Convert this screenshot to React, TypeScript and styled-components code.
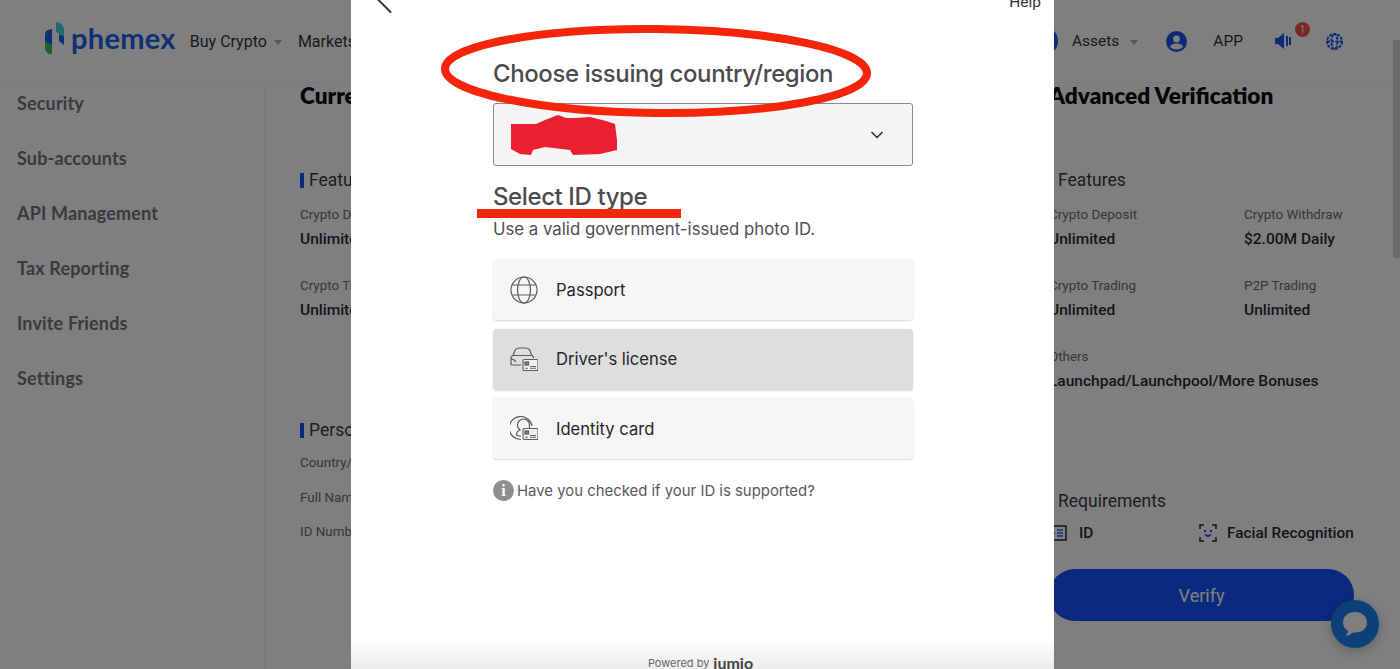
import React from 'react';
import styled, { createGlobalStyle } from 'styled-components';
import { ChevronDown, ChevronLeft } from 'lucide-react';

const GlobalStyle = createGlobalStyle`
  html, body {
    margin: 0;
    padding: 0;
    height: 669px;
    overflow: hidden;
    background: #fff;
    font-family: Roboto, "Liberation Sans", sans-serif;
  }
  * { box-sizing: border-box; }
`;

const Page = styled.div`
  width: 1400px;
  height: 669px;
  overflow: hidden;
  display: flex;
  flex-direction: column;
  background: #fff;
`;

const Header = styled.header`
  height: 83px;
  flex: none;
  display: flex;
  align-items: center;
  justify-content: space-between;
  padding: 0 57px 0 44px;
  border-bottom: 1px solid #f4f4f4;
`;

const NavGroup = styled.div`
  display: flex;
  align-items: center;
`;

const LogoWrap = styled.div`
  display: flex;
  align-items: center;
  gap: 5px;
  margin: 0 14px 6px 0;
`;

const LogoText = styled.span`
  font-family: Lato, sans-serif;
  font-weight: 700;
  font-size: 29px;
  line-height: 34px;
  letter-spacing: 0.3px;
  color: #1c62e6;
`;

const NavLink = styled.span<{ $left?: number; $right?: number; $size?: number }>`
  font-size: ${(p) => p.$size ?? 16}px;
  color: #33333a;
  margin: 0 ${(p) => p.$right ?? 0}px 0 ${(p) => p.$left ?? 0}px;
  white-space: nowrap;
`;

const Caret = styled.span<{ $gap?: number; $left?: number }>`
  width: 0;
  height: 0;
  margin: 2px ${(p) => p.$gap ?? 0}px 0 ${(p) => p.$left ?? 7}px;
  border-left: 4px solid transparent;
  border-right: 4px solid transparent;
  border-top: 5px solid #aaa;
`;

const IconSlot = styled.span<{ $right?: number }>`
  position: relative;
  display: flex;
  margin-right: ${(p) => p.$right ?? 0}px;
`;

const Avatar = styled.span`
  width: 30px;
  height: 30px;
  border-radius: 50%;
  background: #1a55e8;
  margin-right: 14px;
`;

const Badge = styled.span`
  position: absolute;
  top: -11px;
  left: 20px;
  width: 15px;
  height: 15px;
  border-radius: 50%;
  background: #f0504e;
  color: #fff;
  font-size: 10px;
  line-height: 15px;
  text-align: center;
`;

const Body = styled.div`
  flex: 1;
  display: flex;
  min-height: 0;
`;

const Sidebar = styled.nav`
  width: 265px;
  flex: none;
  display: flex;
  flex-direction: column;
  gap: 15px;
  padding-left: 17px;
  border-right: 1px solid #f0f0f0;
`;

const SideItem = styled.div`
  height: 40px;
  line-height: 40px;
  font-family: Lato, sans-serif;
  font-size: 18px;
  font-weight: 700;
  letter-spacing: 0.15px;
  color: #74747c;
`;

const Main = styled.main`
  flex: 1;
  display: flex;
  padding-left: 35px;
`;

const Column = styled.section<{ $width: number }>`
  width: ${(p) => p.$width}px;
  flex: none;
  display: flex;
  flex-direction: column;
`;

const Title = styled.h2`
  margin: 0 0 59px;
  height: 26px;
  font-family: Lato, sans-serif;
  font-size: 22.6px;
  line-height: 26px;
  font-weight: 800;
  color: #0c0c10;
  white-space: nowrap;
`;

const SectionLabel = styled.h3<{ $top?: number }>`
  margin: ${(p) => p.$top ?? 0}px 0 0;
  height: 24px;
  line-height: 24px;
  font-size: 17.5px;
  font-weight: 400;
  color: #3a3a40;
  white-space: nowrap;
  display: flex;
  align-items: center;
  gap: 5px;

  &::before {
    content: '';
    width: 4px;
    height: 15px;
    background: #1a4dff;
  }
`;

const InfoGrid = styled.div`
  margin-top: 13px;
  display: grid;
  grid-template-columns: 195px 150px;
  row-gap: 27px;
`;

const InfoCell = styled.div<{ $wide?: boolean }>`
  display: flex;
  flex-direction: column;
  gap: 4px;
  grid-column: ${(p) => (p.$wide ? '1 / span 2' : 'auto')};
`;

const InfoLabel = styled.span`
  height: 20px;
  line-height: 20px;
  font-size: 13.4px;
  color: #6c6c72;
  white-space: nowrap;
`;

const InfoValue = styled.span`
  height: 20px;
  line-height: 20px;
  font-size: 15.5px;
  font-weight: 500;
  color: #2a2a30;
  white-space: nowrap;
`;

const PersonalRows = styled.div`
  margin-top: 11px;
  display: flex;
  flex-direction: column;
  gap: 14.5px;
`;

const ReqRow = styled.div`
  margin-top: 8px;
  height: 24px;
  display: grid;
  grid-template-columns: 150px 160px;
`;

const ReqItem = styled.span<{ $gap: number }>`
  display: flex;
  align-items: center;
  gap: ${(p) => p.$gap}px;
  font-size: 15.4px;
  font-weight: 500;
  color: #2a2a30;
  white-space: nowrap;
`;

const VerifyButton = styled.button`
  margin-top: 24px;
  width: 305px;
  height: 52px;
  border: 0;
  border-radius: 26px;
  background: #1554ff;
  color: #fff;
  font-family: Roboto, sans-serif;
  font-size: 18px;
  padding: 0;
`;

const Scrollbar = styled.div`
  position: fixed;
  top: 40px;
  right: 0;
  width: 7px;
  height: 218px;
  background: #d4d4d4;
`;

const ChatBubble = styled.div`
  position: fixed;
  left: 1331px;
  top: 600px;
  width: 48px;
  height: 48px;
  border-radius: 50%;
  background: #1a7ef0;
  box-shadow: 0 3px 12px rgba(0, 0, 0, 0.25);
  display: flex;
  align-items: center;
  justify-content: center;
`;

const Dim = styled.div`
  position: fixed;
  inset: 0;
  background: rgba(0, 0, 0, 0.5);
`;

const Modal = styled.div`
  position: fixed;
  top: 0;
  left: 351px;
  width: 703px;
  height: 669px;
  background: #fff;
  display: flex;
  flex-direction: column;
  overflow: hidden;
`;

const ModalTop = styled.div`
  height: 26px;
  margin-top: -10px;
  padding: 0 13px 0 7px;
  display: flex;
  justify-content: space-between;
  color: #333;
  font-size: 15.5px;
  line-height: 24px;
  flex: none;
`;

const BackIcon = styled(ChevronLeft)`
  margin-top: -17px;
`;

const ModalBody = styled.div`
  flex: 1;
  width: 420px;
  margin-left: 142px;
  display: flex;
  flex-direction: column;
`;

const Heading = styled.h1`
  margin: 41px 0 0;
  height: 34px;
  font-family: Inter, sans-serif;
  font-size: 24px;
  line-height: 34px;
  font-weight: 500;
  letter-spacing: -0.4px;
  color: #4b4b4f;
  white-space: nowrap;
`;

const SelectBox = styled.div`
  margin-top: 12px;
  height: 63px;
  flex: none;
  border: 1px solid #8a8a8a;
  border-radius: 3px;
  background: #f5f5f5;
  display: flex;
  align-items: center;
  justify-content: flex-end;
  padding-right: 25px;
  color: #333;
`;

const SubHeading = styled(Heading)`
  margin-top: 14px;
`;

const Hint = styled.p`
  margin: 0;
  height: 30px;
  line-height: 30px;
  font-family: Inter, sans-serif;
  font-size: 16.8px;
  color: #4e4e52;
  white-space: nowrap;
`;

const Options = styled.div`
  margin-top: 15px;
  display: flex;
  flex-direction: column;
  gap: 8.5px;
`;

const Option = styled.div<{ $active?: boolean }>`
  height: 61px;
  border-radius: 4px;
  display: flex;
  align-items: center;
  gap: 18px;
  padding-left: 17px;
  font-family: Inter, sans-serif;
  font-size: 16.6px;
  color: #26262a;
  background: ${(p) => (p.$active ? '#dedede' : '#f6f6f6')};
  box-shadow: 0 1px 2px rgba(0, 0, 0, 0.16);
`;

const Supported = styled.div`
  margin-top: 21px;
  display: flex;
  align-items: center;
  gap: 3px;
  font-family: Inter, sans-serif;
  font-size: 14.9px;
  color: #59595d;
  white-space: nowrap;
`;

const InfoDot = styled.span`
  width: 21px;
  height: 21px;
  border-radius: 50%;
  background: #8e8e8e;
  color: #fff;
  font-family: "Liberation Serif", serif;
  font-weight: 700;
  font-size: 16px;
  line-height: 21px;
  text-align: center;
`;

const ModalFooter = styled.div`
  height: 30px;
  flex: none;
  background: linear-gradient(#fff, #ececec);
  display: flex;
  align-items: flex-end;
  justify-content: center;
  gap: 4px;
  font-family: Inter, sans-serif;
  font-size: 11px;
  line-height: 12px;
  color: #666;
  padding-right: 4px;
  overflow: hidden;
`;

const Jumio = styled.span`
  font-family: Lato, sans-serif;
  font-size: 16px;
  line-height: 12px;
  font-weight: 700;
  color: #444;
`;

const Markup = styled.svg`
  position: fixed;
  top: 0;
  left: 0;
  pointer-events: none;
`;

const Logo = () => (
  <svg width="22" height="34" viewBox="0 0 22 34">
    <path d="M1 14 Q1 10 4 9 L8 8 V24 L1 21 Z" fill="#1c62e6" />
    <path d="M1 21 L8 24 V33 Q3 34 1 28 Z" fill="#35c45a" />
    <path d="M12 1 Q19 1 20 9 V15 L12 11 Z" fill="#4fd0d8" />
    <path d="M15 13 L20 15 V24 L15 20 Z" fill="#1c62e6" />
  </svg>
);

const UserIcon = () => (
  <svg width="21" height="21" viewBox="0 0 21 21">
    <circle cx="10.5" cy="10.5" r="10.5" fill="#1a55e8" />
    <circle cx="10.5" cy="8" r="3.4" fill="#fff" />
    <path d="M4 16 Q5 12.5 10.5 12.5 Q16 12.5 17 16 Q14 18.5 10.5 18.5 Q7 18.5 4 16 Z" fill="#fff" />
  </svg>
);

const SpeakerIcon = () => (
  <svg width="16" height="16" viewBox="0 0 16 16">
    <path d="M0 5 H3 L9 0 V16 L3 11 H0 Z" fill="#1a55e8" />
    <rect x="11" y="3" width="2" height="10" fill="#1a55e8" />
    <rect x="14" y="4" width="2" height="8" fill="#1a55e8" />
  </svg>
);

const GlobeDots = () => (
  <svg width="17" height="17" viewBox="0 0 17 17" fill="none" stroke="#1a55e8" strokeWidth="2" strokeDasharray="3 1.2">
    <circle cx="8.5" cy="8.5" r="7.5" />
    <ellipse cx="8.5" cy="8.5" rx="3" ry="7.5" />
    <path d="M1 8.5 H16" />
  </svg>
);

const GlobeLine = () => (
  <svg width="28" height="28" viewBox="0 0 28 28" fill="none" stroke="#5c5c5c" strokeWidth="1.2">
    <circle cx="14" cy="14" r="13" />
    <ellipse cx="14" cy="14" rx="6.5" ry="13" />
    <path d="M2.5 9 H25.5 M2.5 19 H25.5" />
  </svg>
);

const CardMark = () => (
  <g>
    <rect x="13" y="12.5" width="15" height="11" rx="1.2" fill="#f0f0f0" stroke="#5c5c5c" strokeWidth="1.1" />
    <rect x="15" y="15" width="3.5" height="3" fill="#888" />
    <path d="M20 19.5 H26 M20 21.3 H26 M15 21.3 H18" stroke="#5c5c5c" strokeWidth="0.9" />
  </g>
);

const CarIcon = () => (
  <svg width="28" height="24" viewBox="0 0 28 24" fill="none" stroke="#5c5c5c" strokeWidth="1.2">
    <path d="M1 18 V11 Q1 9.5 3 8.500 L5 3.500 Q6 1 10 1 H15 Q19 1 20 3.500 L21.500 8 Q23 9 24 11 M3 8.500 H21 M1 18 H11 M1 12 Q4 12 6 15" />
    <CardMark />
  </svg>
);

const HeadIcon = () => (
  <svg width="28" height="26" viewBox="0 0 28 26" fill="none" stroke="#5c5c5c" strokeWidth="1.2">
    <path d="M22 10 A11.500 11.500 0 1 0 11 23.500" />
    <path d="M11 20 H9 Q6.500 20 6.500 17.500 Q7 15 10 14 Q7.500 12 7.500 9 A6 6 0 0 1 19.500 9 V12" />
    <CardMark />
  </svg>
);

const IdCard = () => (
  <svg width="18" height="16" viewBox="0 0 18 16" fill="none">
    <rect x="1" y="1" width="16" height="14" stroke="#222" strokeWidth="1.4" />
    <path d="M8 5 H14 M8 8 H14 M8 11 H14" stroke="#2a5cff" strokeWidth="1.4" />
    <circle cx="4.500" cy="8" r="1.600" fill="#2a5cff" />
  </svg>
);

const FaceScan = () => (
  <svg width="18" height="18" viewBox="0 0 18 18" fill="none">
    <path d="M1 5 V1 H5 M13 1 H17 V5 M1 13 V17 H5 M13 17 H17 V13" stroke="#222" strokeWidth="1.5" />
    <circle cx="6" cy="7" r="1.200" fill="#2a5cff" />
    <circle cx="12" cy="7" r="1.200" fill="#2a5cff" />
    <path d="M5 10.500 Q9 15.500 13 10.500 Z" fill="#2a5cff" />
  </svg>
);

const ChatIcon = () => (
  <svg width="26" height="26" viewBox="0 0 26 26">
    <path d="M13 1 C20 1 25 5.500 25 11.500 C25 17.500 20 21.500 13 21.500 L11 21.500 Q8 24.500 3.500 25 Q6 22.500 6 19.800 C2.800 17.800 1 15 1 11.500 C1 5.500 6 1 13 1 Z" fill="#fff" />
  </svg>
);

const features = [
  { label: 'Crypto Deposit', value: 'Unlimited' },
  { label: 'Crypto Withdraw', value: '$2.00M Daily' },
  { label: 'Crypto Trading', value: 'Unlimited' },
  { label: 'P2P Trading', value: 'Unlimited' },
];

const App: React.FC = () => {
  return (
    <>
      <GlobalStyle />
      <Page>
        <Header>
          <NavGroup>
            <LogoWrap>
              <Logo />
              <LogoText>phemex</LogoText>
            </LogoWrap>
            <NavLink>Buy Crypto</NavLink>
            <Caret $gap={16} />
            <NavLink>Markets</NavLink>
          </NavGroup>
          <NavGroup>
            <Avatar />
            <NavLink $size={15.5}>Assets</NavLink>
            <Caret $left={11} $gap={28} />
            <IconSlot>
              <UserIcon />
            </IconSlot>
            <NavLink $size={15.5} $left={26} $right={32}>APP</NavLink>
            <IconSlot $right={35}>
              <SpeakerIcon />
              <Badge>1</Badge>
            </IconSlot>
            <IconSlot>
              <GlobeDots />
            </IconSlot>
          </NavGroup>
        </Header>
        <Body>
          <Sidebar>
            {['Security', 'Sub-accounts', 'API Management', 'Tax Reporting', 'Invite Friends', 'Settings'].map((item) => (
              <SideItem key={item}>{item}</SideItem>
            ))}
          </Sidebar>
          <Main>
            <Column $width={749}>
              <Title>Current Verification</Title>
              <SectionLabel>Features</SectionLabel>
              <InfoGrid>
                {features.map((f) => (
                  <InfoCell key={f.label}>
                    <InfoLabel>{f.label}</InfoLabel>
                    <InfoValue>{f.value}</InfoValue>
                  </InfoCell>
                ))}
              </InfoGrid>
              <SectionLabel $top={98}>Personal Information</SectionLabel>
              <PersonalRows>
                <InfoLabel>Country/Region</InfoLabel>
                <InfoLabel>Full Name</InfoLabel>
                <InfoLabel>ID Number</InfoLabel>
              </PersonalRows>
            </Column>
            <Column $width={345}>
              <Title>Advanced Verification</Title>
              <SectionLabel>Features</SectionLabel>
              <InfoGrid>
                {features.map((f) => (
                  <InfoCell key={f.label}>
                    <InfoLabel>{f.label}</InfoLabel>
                    <InfoValue>{f.value}</InfoValue>
                  </InfoCell>
                ))}
                <InfoCell $wide>
                  <InfoLabel>Others</InfoLabel>
                  <InfoValue>Launchpad/Launchpool/More Bonuses</InfoValue>
                </InfoCell>
              </InfoGrid>
              <SectionLabel $top={98}>Requirements</SectionLabel>
              <ReqRow>
                <ReqItem $gap={12}>
                  <IdCard />
                  ID
                </ReqItem>
                <ReqItem $gap={10}>
                  <FaceScan />
                  Facial Recognition
                </ReqItem>
              </ReqRow>
              <VerifyButton>Verify</VerifyButton>
            </Column>
          </Main>
        </Body>
        <Scrollbar />
        <ChatBubble>
          <ChatIcon />
        </ChatBubble>
      </Page>
      <Dim />
      <Modal>
        <ModalTop>
          <BackIcon size={52} strokeWidth={0.9} />
          <span>Help</span>
        </ModalTop>
        <ModalBody>
          <Heading>Choose issuing country/region</Heading>
          <SelectBox>
            <ChevronDown size={20} strokeWidth={2} />
          </SelectBox>
          <SubHeading>Select ID type</SubHeading>
          <Hint>Use a valid government-issued photo ID.</Hint>
          <Options>
            <Option>
              <GlobeLine />
              Passport
            </Option>
            <Option $active>
              <CarIcon />
              Driver's license
            </Option>
            <Option>
              <HeadIcon />
              Identity card
            </Option>
          </Options>
          <Supported>
            <InfoDot>i</InfoDot>
            Have you checked if your ID is supported?
          </Supported>
        </ModalBody>
        <ModalFooter>
          Powered by <Jumio>jumio</Jumio>
        </ModalFooter>
      </Modal>
      <Markup width="1400" height="669" viewBox="0 0 1400 669">
        <ellipse cx="656" cy="71" rx="211" ry="42" fill="none" stroke="#f5250c" strokeWidth="8" transform="rotate(0.6 656 71)" />
        <rect x="477" y="209" width="204" height="9" fill="#f5250c" />
        <path
          d="M511 124 L536 124 L545 120 L558 115 L566 118 L575 118 L590 117 L606 121 L615 124 L617 140 L617 150 L600 154 L573 155 L570 150 L545 147 L533 150 L531 155 L520 154 L511 149 Z"
          fill="#ea1f2f"
        />
      </Markup>
    </>
  );
};

export default App;
